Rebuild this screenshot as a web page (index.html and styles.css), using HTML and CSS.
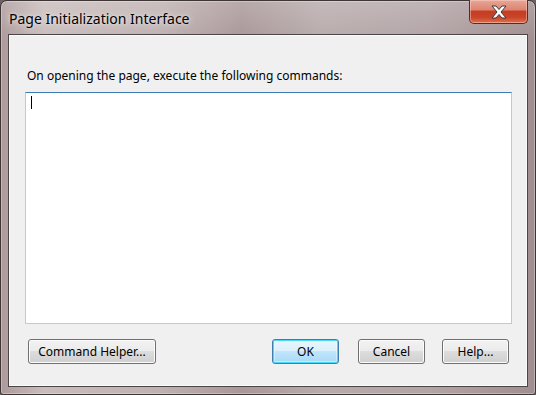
FILE: index.html
```html
<!DOCTYPE html>
<html lang="en">
<head>
  <meta charset="UTF-8" />
  <title>Page Initialization Interface</title>
  <link rel="stylesheet" href="styles.css">
</head>
<body>

  <div class="window">
    <div class="titlebar">
      <span class="title">Page Initialization Interface</span>
      <button class="btn-close" title="Close">
        <svg width="16" height="14" viewBox="0 0 16 14">
          <polygon points="1,1 5,1 8,4.5 11,1 15,1 10,7 15,13 11,13 8,9.5 5,13 1,13 6,7" fill="#fff" stroke="#3b3b3b" stroke-width="1" stroke-linejoin="round"/>
        </svg>
      </button>
    </div>

    <div class="client">
      <label class="prompt" for="commands">On opening the page, execute the following commands:</label>
      <div class="editbox" id="commands"><span class="caret"></span></div>

      <div class="btn-row">
        <button class="btn">Command Helper...</button>
        <button class="btn btn-default btn-ok">OK</button>
        <button class="btn btn-cancel">Cancel</button>
        <button class="btn btn-help">Help...</button>
      </div>
    </div>
  </div>

</body>
</html>
```

FILE: styles.css
```css
* {
  box-sizing: border-box;
}
body {
  margin: 0;
  padding: 0;
  background: #6b6163;
  font-family: 'Noto Sans', 'Liberation Sans', sans-serif;
}

.window {
  width: 536px;
  height: 395px;
  border: 1px solid #3d3536;
  border-radius: 7px 7px 3px 3px;
  padding: 0 7px 7px 7px;
  background:
    linear-gradient(to bottom, rgba(255,255,255,0.18), rgba(255,255,255,0) 40px),
    linear-gradient(to right, #ad9a9b 0%, #c9bcbc 8%, #bfb1b1 30%, #a99799 45%, #b8abac 60%, #b3a4a6 80%, #a08e90 100%);
  display: flex;
  flex-direction: column;
  box-shadow: inset 0 0 0 1px rgba(255,255,255,0.3);
}

.titlebar {
  height: 33px;
  display: flex;
  justify-content: space-between;
  align-items: flex-start;
}
.title {
  margin-top: 8px;
  margin-left: 1px;
  font-size: 14px;
  color: #000;
  text-shadow: 0 0 8px rgba(255,255,255,0.8), 0 0 3px rgba(255,255,255,0.6);
}

.btn-close {
  width: 59px;
  height: 24px;
  margin: -1px 0 0 0;
  padding: 0;
  border: 1px solid #5c2a22;
  border-top: none;
  border-radius: 0 0 5px 5px;
  background: linear-gradient(to bottom, #e9a797 0%, #dc8470 42%, #c53d22 50%, #c8442a 75%, #e2704e 100%);
  box-shadow: inset 0 0 0 1px rgba(255,220,210,0.45);
  display: flex;
  align-items: center;
  justify-content: center;
  cursor: pointer;
}

.client {
  flex: 1;
  background: #f0f0f0;
  border: 1px solid #4a4546;
  box-shadow: inset 0 0 0 1px #fbfbfb;
  padding: 33px 16px 0 16px;
  display: flex;
  flex-direction: column;
}

.prompt {
  display: block;
  height: 15px;
  line-height: 15px;
  margin-left: 2px;
  font-size: 12px;
  color: #000;
}

.editbox {
  margin-top: 9px;
  width: 487px;
  height: 232px;
  background: #fff;
  border: 1px solid #b3cde6;
  border-top-color: #3d7bb3;
  padding: 3px 5px;
}
.caret {
  display: block;
  width: 1px;
  height: 13px;
  background: #000;
}

.btn-row {
  display: flex;
  margin-top: 15px;
  margin-left: 3px;
}

.btn {
  width: 67px;
  height: 25px;
  padding: 0;
  font-family: inherit;
  font-size: 12px;
  color: #000;
  border: 1px solid #707070;
  border-radius: 3px;
  background: linear-gradient(to bottom, #f2f2f2 0%, #ebebeb 49%, #dddddd 50%, #cfcfcf 100%);
  box-shadow: inset 0 0 0 1px #fcfcfc;
  cursor: pointer;
}
.btn:first-child {
  width: 128px;
}
.btn-default {
  border-color: #3c7fb1;
  background: linear-gradient(to bottom, #eaf6fd 0%, #d9f0fc 49%, #bee6fd 50%, #a7d9f5 100%);
  box-shadow: inset 0 0 0 1px #48d8fb, inset 0 0 0 2px rgba(255,255,255,0.4);
}
.btn-ok {
  margin-left: 116px;
}
.btn-cancel {
  margin-left: 19px;
}
.btn-help {
  margin-left: 17px;
}
```
